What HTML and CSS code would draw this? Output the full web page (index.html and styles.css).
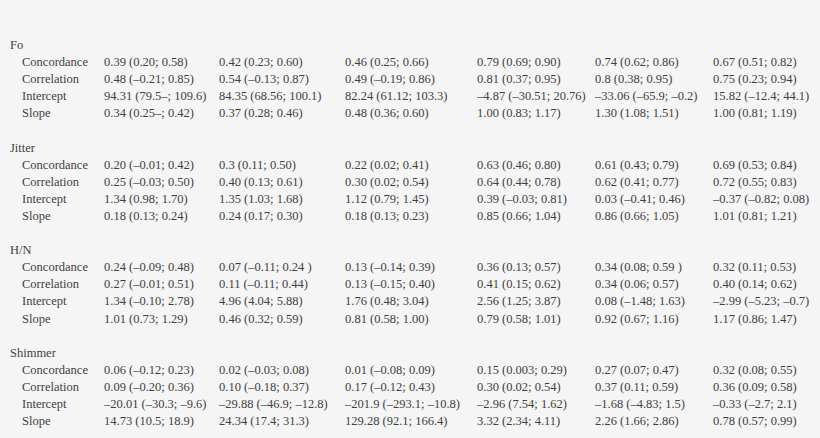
FILE: index.html
```html
<!DOCTYPE html>
<html>
<head>
<meta charset="utf-8">
<link rel="stylesheet" href="styles.css">
</head>
<body>
<div class="page">
  <section class="group">
    <div class="head">Fo</div>
    <div class="lab">Concordance</div><div>0.39 (0.20; 0.58)</div><div>0.42 (0.23; 0.60)</div><div>0.46 (0.25; 0.66)</div><div>0.79 (0.69; 0.90)</div><div>0.74 (0.62; 0.86)</div><div>0.67 (0.51; 0.82)</div>
    <div class="lab">Correlation</div><div>0.48 (–0.21; 0.85)</div><div>0.54 (–0.13; 0.87)</div><div>0.49 (–0.19; 0.86)</div><div>0.81 (0.37; 0.95)</div><div>0.8 (0.38; 0.95)</div><div>0.75 (0.23; 0.94)</div>
    <div class="lab">Intercept</div><div>94.31 (79.5–; 109.6)</div><div>84.35 (68.56; 100.1)</div><div>82.24 (61.12; 103.3)</div><div>–4.87 (–30.51; 20.76)</div><div>–33.06 (–65.9; –0.2)</div><div>15.82 (–12.4; 44.1)</div>
    <div class="lab">Slope</div><div>0.34 (0.25–; 0.42)</div><div>0.37 (0.28; 0.46)</div><div>0.48 (0.36; 0.60)</div><div>1.00 (0.83; 1.17)</div><div>1.30 (1.08; 1.51)</div><div>1.00 (0.81; 1.19)</div>
  </section>
  <section class="group">
    <div class="head">Jitter</div>
    <div class="lab">Concordance</div><div>0.20 (–0.01; 0.42)</div><div>0.3 (0.11; 0.50)</div><div>0.22 (0.02; 0.41)</div><div>0.63 (0.46; 0.80)</div><div>0.61 (0.43; 0.79)</div><div>0.69 (0.53; 0.84)</div>
    <div class="lab">Correlation</div><div>0.25 (–0.03; 0.50)</div><div>0.40 (0.13; 0.61)</div><div>0.30 (0.02; 0.54)</div><div>0.64 (0.44; 0.78)</div><div>0.62 (0.41; 0.77)</div><div>0.72 (0.55; 0.83)</div>
    <div class="lab">Intercept</div><div>1.34 (0.98; 1.70)</div><div>1.35 (1.03; 1.68)</div><div>1.12 (0.79; 1.45)</div><div>0.39 (–0.03; 0.81)</div><div>0.03 (–0.41; 0.46)</div><div>–0.37 (–0.82; 0.08)</div>
    <div class="lab">Slope</div><div>0.18 (0.13; 0.24)</div><div>0.24 (0.17; 0.30)</div><div>0.18 (0.13; 0.23)</div><div>0.85 (0.66; 1.04)</div><div>0.86 (0.66; 1.05)</div><div>1.01 (0.81; 1.21)</div>
  </section>
  <section class="group">
    <div class="head">H/N</div>
    <div class="lab">Concordance</div><div>0.24 (–0.09; 0.48)</div><div>0.07 (–0.11; 0.24 )</div><div>0.13 (–0.14; 0.39)</div><div>0.36 (0.13; 0.57)</div><div>0.34 (0.08; 0.59 )</div><div>0.32 (0.11; 0.53)</div>
    <div class="lab">Correlation</div><div>0.27 (–0.01; 0.51)</div><div>0.11 (–0.11; 0.44)</div><div>0.13 (–0.15; 0.40)</div><div>0.41 (0.15; 0.62)</div><div>0.34 (0.06; 0.57)</div><div>0.40 (0.14; 0.62)</div>
    <div class="lab">Intercept</div><div>1.34 (–0.10; 2.78)</div><div>4.96 (4.04; 5.88)</div><div>1.76 (0.48; 3.04)</div><div>2.56 (1.25; 3.87)</div><div>0.08 (–1.48; 1.63)</div><div>–2.99 (–5.23; –0.7)</div>
    <div class="lab">Slope</div><div>1.01 (0.73; 1.29)</div><div>0.46 (0.32; 0.59)</div><div>0.81 (0.58; 1.00)</div><div>0.79 (0.58; 1.01)</div><div>0.92 (0.67; 1.16)</div><div>1.17 (0.86; 1.47)</div>
  </section>
  <section class="group">
    <div class="head">Shimmer</div>
    <div class="lab">Concordance</div><div>0.06 (–0.12; 0.23)</div><div>0.02 (–0.03; 0.08)</div><div>0.01 (–0.08; 0.09)</div><div>0.15 (0.003; 0.29)</div><div>0.27 (0.07; 0.47)</div><div>0.32 (0.08; 0.55)</div>
    <div class="lab">Correlation</div><div>0.09 (–0.20; 0.36)</div><div>0.10 (–0.18; 0.37)</div><div>0.17 (–0.12; 0.43)</div><div>0.30 (0.02; 0.54)</div><div>0.37 (0.11; 0.59)</div><div>0.36 (0.09; 0.58)</div>
    <div class="lab">Intercept</div><div>–20.01 (–30.3; –9.6)</div><div>–29.88 (–46.9; –12.8)</div><div>–201.9 (–293.1; –10.8)</div><div>–2.96 (7.54; 1.62)</div><div>–1.68 (–4.83; 1.5)</div><div>–0.33 (–2.7; 2.1)</div>
    <div class="lab">Slope</div><div>14.73 (10.5; 18.9)</div><div>24.34 (17.4; 31.3)</div><div>129.28 (92.1; 166.4)</div><div>3.32 (2.34; 4.11)</div><div>2.26 (1.66; 2.86)</div><div>0.78 (0.57; 0.99)</div>
  </section>
</div>
</body>
</html>
```
FILE: styles.css
```css
html, body {
  margin: 0;
  padding: 0;
  background: #f5f5f5;
}
body {
  width: 820px;
  height: 438px;
  overflow: hidden;
  font-family: "Liberation Serif", "Times New Roman", serif;
  font-size: 12.5px;
  line-height: 17.1px;
  color: #3f3f3f;
}
.page {
  padding: 37px 0 0 10px;
}
.group {
  display: grid;
  grid-template-columns: 94px 115px 126px 132px 118px 118px 1fr;
  white-space: nowrap;
}
.group + .group {
  margin-top: 17.1px;
}
.head {
  grid-column: 1 / -1;
}
.lab {
  padding-left: 12px;
}
```
